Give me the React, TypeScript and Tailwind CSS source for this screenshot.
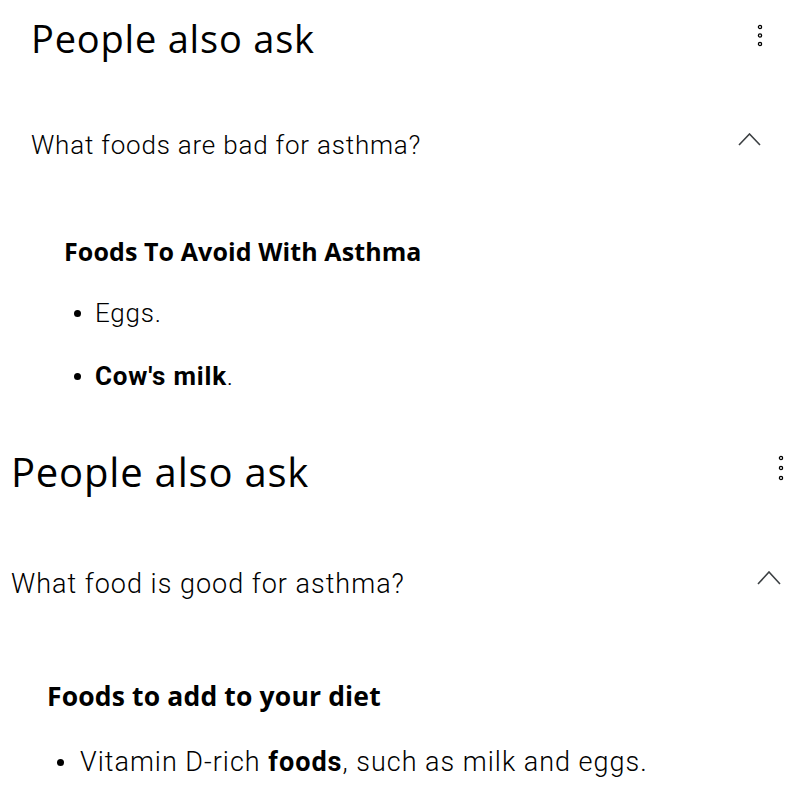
import React from "react";

const heading = { fontFamily: '"Open Sans", "Noto Sans", sans-serif' } as React.CSSProperties;

function Dots({ gap }: { gap: number }) {
  return (
    <svg width="6" height={gap * 2 + 6} viewBox={`0 0 6 ${gap * 2 + 6}`}>
      <circle cx="3" cy="3" r="1.6" fill="none" stroke="#000" strokeWidth="1.3" />
      <circle cx="3" cy={3 + gap} r="1.6" fill="none" stroke="#000" strokeWidth="1.3" />
      <circle cx="3" cy={3 + gap * 2} r="1.6" fill="none" stroke="#000" strokeWidth="1.3" />
    </svg>
  );
}

function Chevron({ w, h }: { w: number; h: number }) {
  return (
    <svg width={w + 2} height={h + 2} viewBox={`0 0 ${w + 2} ${h + 2}`}>
      <polyline
        points={`1,${h + 1} ${w / 2 + 1},1 ${w + 1},${h + 1}`}
        fill="none"
        stroke="#3c4043"
        strokeWidth="1.6"
      />
    </svg>
  );
}

export default function App() {
  return (
    <div className="w-[800px] h-[800px] bg-white overflow-hidden text-black">
      {/* Section 1 */}
      <section className="h-[432px] pl-[31px] flex flex-col">
        <div className="h-[76px] flex items-center justify-between">
          <h2 className="text-[38px] leading-none font-normal tracking-[0.8px]" style={heading}>
            People also ask
          </h2>
          <div className="w-[24px] mr-[28px] mb-[6px] flex justify-center">
            <Dots gap={8.5} />
          </div>
        </div>
        <div className="h-[138px] flex items-center justify-between">
          <span className="font-['Roboto',sans-serif] font-light text-[26px] leading-none tracking-[0.8px]">
            What foods are bad for asthma?
          </span>
          <div className="w-[24px] mr-[39px] mb-[12px] flex justify-center">
            <Chevron w={21} h={11} />
          </div>
        </div>
        <div className="pl-[33px]">
          <div className="h-[74px] flex items-center">
            <h3 className="text-[25px] leading-none font-bold tracking-[0.1px]" style={heading}>
              Foods To Avoid With Asthma
            </h3>
          </div>
          <ul className="font-['Roboto',sans-serif] text-[26px] leading-none tracking-[0.8px]">
            <li className="h-[50px] flex items-center">
              <span className="w-[7px] h-[7px] rounded-full bg-black ml-[10px] mr-[14px]" />
              <span className="font-light">Eggs.</span>
            </li>
            <li className="h-[50px] mt-[13px] flex items-center">
              <span className="w-[7px] h-[7px] rounded-full bg-black ml-[10px] mr-[14px]" />
              <span>
                <b className="font-bold">Cow's milk</b>
                <span className="font-light">.</span>
              </span>
            </li>
          </ul>
        </div>
      </section>

      {/* Section 2 */}
      <section className="pl-[11px] flex flex-col">
        <div className="h-[80px] flex items-center justify-between">
          <h2 className="text-[40px] leading-none font-normal tracking-[0.8px]" style={heading}>
            People also ask
          </h2>
          <div className="w-[24px] mr-[7px] mb-[8px] flex justify-center">
            <Dots gap={10} />
          </div>
        </div>
        <div className="h-[144px] flex items-center justify-between">
          <span className="font-['Roboto',sans-serif] font-light text-[27px] leading-none tracking-[1px]">
            What food is good for asthma?
          </span>
          <div className="w-[24px] mr-[19px] mb-[12px] flex justify-center">
            <Chevron w={22} h={12} />
          </div>
        </div>
        <div className="pl-[36px]">
          <div className="h-[80px] flex items-center">
            <h3 className="text-[26.5px] leading-none font-bold tracking-[0.15px]" style={heading}>
              Foods to add to your diet
            </h3>
          </div>
          <ul className="font-['Roboto',sans-serif] text-[27px] leading-none tracking-[1px]">
            <li className="h-[52px] flex items-center">
              <span className="w-[7px] h-[7px] rounded-full bg-black ml-[10px] mr-[16px]" />
              <span className="font-light">
                Vitamin D-rich <b className="font-bold">foods</b>, such as milk and eggs.
              </span>
            </li>
          </ul>
        </div>
      </section>
    </div>
  );
}
